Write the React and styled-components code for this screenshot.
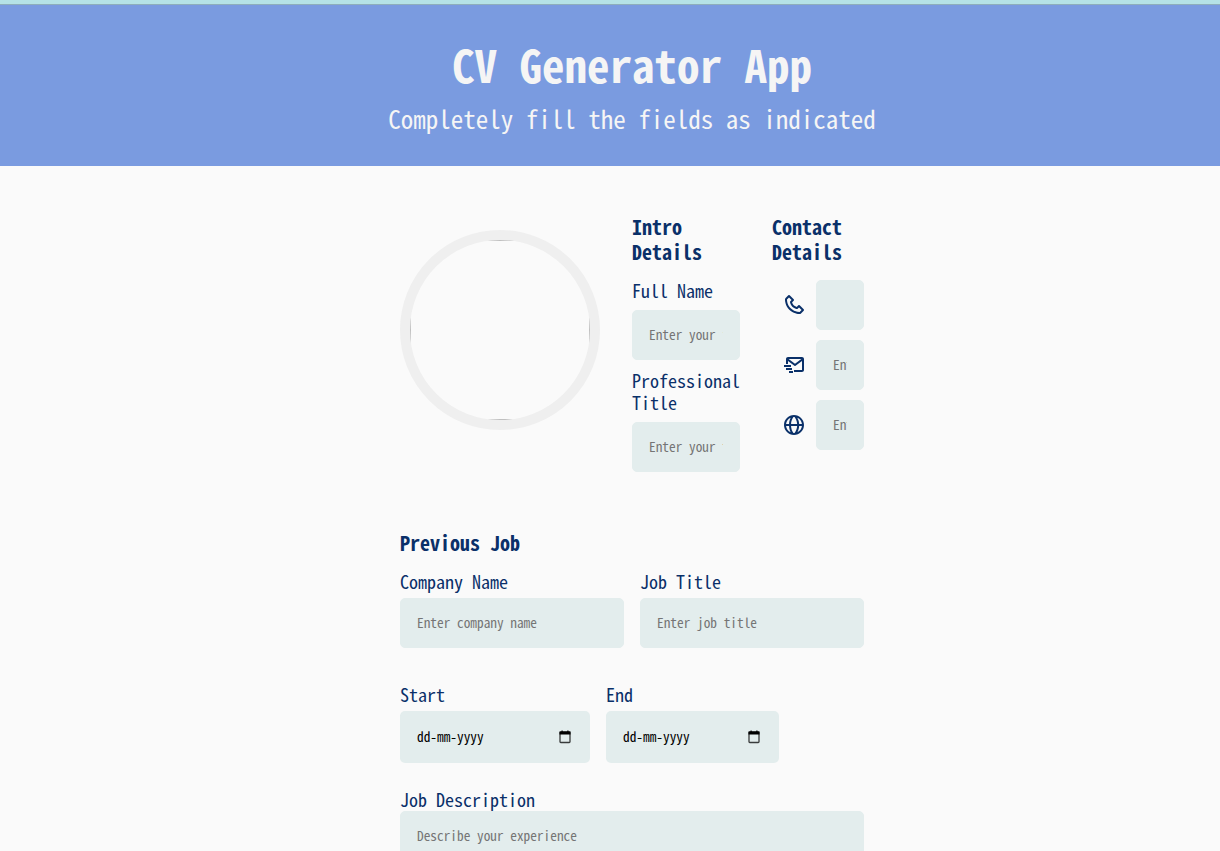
import React from "react";
import styled, { createGlobalStyle } from "styled-components";
import { BiPhone, BiMailSend, BiGlobe } from "react-icons/bi";

const GlobalStyle = createGlobalStyle`
  *, *::before, *::after { box-sizing: border-box; }
  body {
    margin: 0;
    background: #fafafa;
    color: #0a3069;
    font-family: "Noto Sans Mono CJK JP", "Liberation Mono", monospace;
    font-size: 18px;
    line-height: 22px;
  }
  input, textarea, button { font-family: inherit; }
`;

const Header = styled.header`
  background: #7a9be0;
  border-top: 4px solid #b5e2e6;
  box-shadow: inset 0 1px 0 #8eaebb;
  color: #f5f5f5;
  padding: 32px 0 32px 44px;
  text-align: center;
`;

const Title = styled.h1`
  margin: 0;
  font-size: 45px;
  line-height: 56px;
`;

const Subtitle = styled.p`
  margin: 10px 0 0;
  font-size: 25px;
  line-height: 32px;
`;

const Page = styled.main`
  padding: 48px 0 48px 44px;
`;

const Form = styled.form`
  max-width: 464px;
  margin: 0 auto;
`;

const Personal = styled.div`
  display: grid;
  grid-template-columns: 200px 108px minmax(0, 1fr);
  gap: 32px;
  align-items: start;
  margin-bottom: 58px;
`;

const Avatar = styled.div`
  height: 200px;
  margin-top: 16px;
  border: 10px solid #efefef;
  border-radius: 50%;
  overflow: hidden;
`;

const AvatarFrame = styled.div`
  height: 100%;
  border: 1px solid #c0c0c0;
`;

const Section = styled.section`
  min-width: 0;
`;

const SectionTitle = styled.h2`
  margin: 0 0 15px;
  font-size: 20px;
  line-height: 25px;
`;

const Field = styled.div`
  display: flex;
  flex-direction: column;
  gap: ${(p) => p.$gap}px;
  flex: ${(p) => (p.$width ? `0 1 ${p.$width}px` : "1")};
  min-width: 0;
`;

const FieldStack = styled.div`
  display: grid;
  gap: 9px;
`;

const Input = styled.input`
  width: 100%;
  min-width: 0;
  height: 50px;
  padding: 0 16px 2px;
  border: 1px solid #e3eded;
  border-radius: 5px;
  background: #e3eded;
  color: #000;
  &::placeholder { color: ${(p) => p.$ink || "#757575"}; opacity: 1; }
`;

const TextArea = styled(Input)`
  height: 150px;
  padding: 16px;
  line-height: 16px;
  resize: none;
`;

const Contacts = styled.div`
  display: grid;
  gap: 10px;
  padding-top: 1px;
`;

const ContactRow = styled.label`
  display: flex;
  align-items: center;
  gap: 10px;
  padding-left: 10px;
  svg { flex: none; }
`;

const Row = styled.div`
  display: flex;
  gap: 16px;
  margin-bottom: ${(p) => p.$bottom}px;
`;

const DateBox = styled.div`
  display: flex;
  align-items: center;
  height: 52px;
  padding-right: 19px;
  border-radius: 5px;
  background: #e3eded;
`;

const PickerButton = styled.button`
  display: flex;
  padding: 0;
  border: 0;
  background: none;
  color: #000;
`;

function CalendarIcon() {
  return (
    <svg width="12" height="14" viewBox="0 0 12 14" aria-hidden="true">
      <rect x="1" y="2" width="10" height="10.5" rx="0.8" fill="none" stroke="currentColor" strokeOpacity="0.75" strokeWidth="1.3" />
      <path d="M0.5 1.6h11v2.8H0.5zM2.5 0.5h1.2v1.5H2.5zM8.3 0.5h1.2v1.5H8.3z" fill="currentColor" />
    </svg>
  );
}

function TextField({ id, label, gap, placeholder }) {
  return (
    <Field $gap={gap}>
      <label htmlFor={id}>{label}</label>
      <Input id={id} type="text" placeholder={placeholder} />
    </Field>
  );
}

function DateField({ id, label, width }) {
  return (
    <Field $gap={6} $width={width}>
      <label htmlFor={id}>{label}</label>
      <DateBox>
        <Input id={id} type="text" placeholder="dd-mm-yyyy" $ink="#000" />
        <PickerButton type="button" aria-label={`Pick ${label.toLowerCase()} date`}>
          <CalendarIcon />
        </PickerButton>
      </DateBox>
    </Field>
  );
}

function Contact({ icon: Icon, ...rest }) {
  return (
    <ContactRow>
      <Icon size={24} aria-hidden="true" />
      <Input {...rest} />
    </ContactRow>
  );
}

export default function App() {
  return (
    <>
      <GlobalStyle />
      <Header>
        <Title>CV Generator App</Title>
        <Subtitle>Completely fill the fields as indicated</Subtitle>
      </Header>
      <Page>
        <Form>
          <Personal>
            <Avatar><AvatarFrame /></Avatar>
            <Section>
              <SectionTitle>Intro Details</SectionTitle>
              <FieldStack>
                <TextField id="name" label="Full Name" gap={9} placeholder="Enter your full name" />
                <TextField id="title" label="Professional Title" gap={9} placeholder="Enter your title" />
              </FieldStack>
            </Section>
            <Section>
              <SectionTitle>Contact Details</SectionTitle>
              <Contacts>
                <Contact icon={BiPhone} type="tel" aria-label="Phone" />
                <Contact icon={BiMailSend} type="email" aria-label="Email" placeholder="Enter email" />
                <Contact icon={BiGlobe} type="url" aria-label="Website" placeholder="Enter website" />
              </Contacts>
            </Section>
          </Personal>
          <Section>
            <SectionTitle>Previous Job</SectionTitle>
            <Row $bottom={35}>
              <TextField id="company" label="Company Name" gap={6} placeholder="Enter company name" />
              <TextField id="job" label="Job Title" gap={6} placeholder="Enter job title" />
            </Row>
            <Row $bottom={25}>
              <DateField id="start" label="Start" width={190} />
              <DateField id="end" label="End" width={173} />
            </Row>
            <Field $gap={1}>
              <label htmlFor="description">Job Description</label>
              <TextArea as="textarea" id="description" placeholder="Describe your experience" />
            </Field>
          </Section>
        </Form>
      </Page>
    </>
  );
}
